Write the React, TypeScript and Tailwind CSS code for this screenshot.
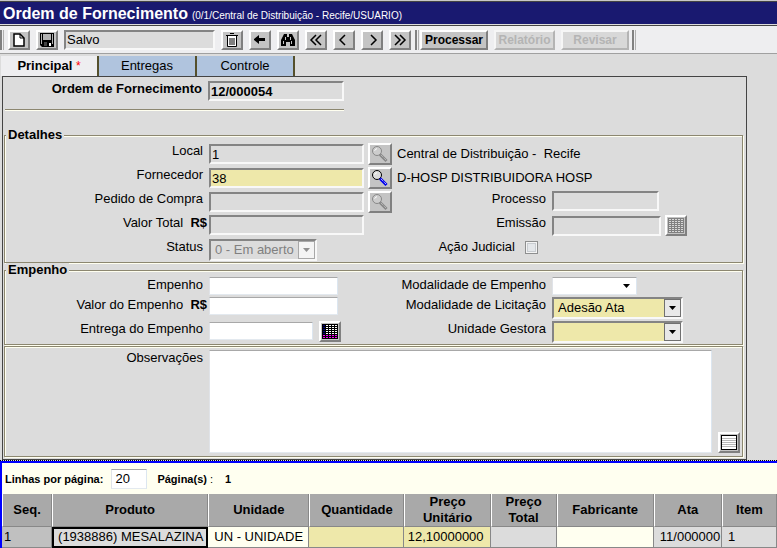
import type { ReactNode } from "react";

const BTN = "flex items-center justify-center border-2 border-t-white border-l-white border-r-[#808080] border-b-[#808080] bg-[#c4c4c4]";
const BTN_OFF = "flex items-center justify-center border-2 border-t-[#f6f6f6] border-l-[#f6f6f6] border-r-[#b4b4b4] border-b-[#b4b4b4] bg-[#d8d8d8] text-[#b4b4b4]";
const SUNK = "h-5 min-w-0 border-2 border-t-[#848484] border-l-[#848484] border-r-[#f8f8f8] border-b-[#f8f8f8] px-px text-[13px] leading-4";
const FLAT = "min-w-0 border border-t-[#a8a8a8] border-l-[#e0e3e8] border-r-[#dce6f0] border-b-[#e3e9ef] bg-white text-[13px]";
const GROUP = "ml-px mr-[3px] border border-[#8c8770] px-px pb-px shadow-[inset_1px_1px_0_#fffff0,1px_1px_0_#fffff0]";
const GRID = "grid grid-cols-[203px_159px_184px_1fr]";

function Icon({ children, fill = false }: { children: ReactNode; fill?: boolean }) {
  return (
    <svg width="18" height="16" viewBox="0 0 18 16" fill={fill ? "#000" : "none"} stroke={fill ? "none" : "#000"} strokeWidth="2" aria-hidden="true" className="shrink-0">
      {children}
    </svg>
  );
}

function ToolButton({ label, children }: { label: string; children: ReactNode }) {
  return (
    <button type="button" aria-label={label} className={`${BTN} h-5 w-[22px] shrink-0`}>
      {children}
    </button>
  );
}

function Separator() {
  return <div className="h-5 w-1 shrink-0 border-l-2 border-r border-l-[#808080] border-r-[#b0b0b0]" />;
}

function SearchButton({ label, disabled = false }: { label: string; disabled?: boolean }) {
  return (
    <button type="button" aria-label={label} disabled={disabled} className={`${BTN} h-[22px] w-6 shrink-0`}>
      <svg width="20" height="18" viewBox="0 0 20 18" fill="none" aria-hidden="true">
        <circle cx="7" cy="6" r="4.5" fill={disabled ? "#ccc" : "#ddd"} stroke={disabled ? "#888" : "#000"} />
        <path d="M4.500 5.500L7 3.500" stroke="#fff" />
        <path d="M10 9.500L16.500 16" stroke={disabled ? "#888" : "#00e"} strokeWidth="3" />
        <path d="M11 10L16.500 15.500" stroke={disabled ? "#ccc" : "#fff"} strokeWidth="1" strokeDasharray="1 1" />
      </svg>
    </button>
  );
}

function CalendarButton({ label, disabled = false }: { label: string; disabled?: boolean }) {
  const rows = [1, 3, 5, 7, 9, 11, 13];
  const days = [1, 4, 7, 10, 13];
  return (
    <button type="button" aria-label={label} disabled={disabled} className={`${BTN} h-[21px] w-[22px] shrink-0`}>
      <svg width="16" height="15" viewBox="0 0 16 15" shapeRendering="crispEdges" aria-hidden="true">
        <rect width="16" height="15" fill={disabled ? "#808080" : "#000"} />
        {rows.map((y) =>
          days.map((x) => (
            <rect
              key={`${x}-${y}`}
              x={x}
              y={y}
              width="2"
              height="1"
              fill={disabled ? "#d8d8d8" : y > 10 ? "#f0f" : x === 1 ? "#000080" : "#fff"}
            />
          )),
        )}
      </svg>
    </button>
  );
}

function Label({ htmlFor, children }: { htmlFor: string; children: ReactNode }) {
  return (
    <label htmlFor={htmlFor} className="block whitespace-nowrap pr-1.5 text-right leading-4">
      {children}
    </label>
  );
}

function Arrow({ color }: { color: string }) {
  return (
    <svg width="7" height="4" viewBox="0 0 7 4" aria-hidden="true">
      <path d="M0 0H7L3.500 4Z" fill={color} />
    </svg>
  );
}

function Select({ id, value, width, tone }: { id: string; value: string; width: string; tone: "gray" | "gold" | "white" }) {
  const look =
    tone === "white"
      ? "h-[18px] border border-t-[#a8a8a8] border-l-[#e0e3e8] border-r-[#dce6f0] border-b-[#e3e9ef] bg-white"
      : tone === "gold"
        ? "h-[22px] border-2 border-t-[#848484] border-l-[#848484] border-r-[#f8f8f8] border-b-[#f8f8f8] bg-[#eee8aa]"
        : "h-[22px] border-2 border-t-[#848484] border-l-[#848484] border-r-[#f8f8f8] border-b-[#f8f8f8] bg-[#dcdcdc] text-[#808080]";
  const box = tone === "white" ? "" : tone === "gold" ? "border border-[#707070] bg-[#e8e8e8]" : "border border-[#a8a8a8] bg-[#f4f4f4]";
  return (
    <div className={`grid ${width}`}>
      <select id={id} disabled={tone === "gray"} className={`col-start-1 row-start-1 w-full appearance-none pl-1 text-[13px] leading-4 opacity-100 ${look}`}>
        <option>{value}</option>
      </select>
      <div className={`pointer-events-none col-start-1 row-start-1 flex items-center justify-end pr-0.5 ${tone === "white" ? "h-[18px]" : "h-[22px]"}`}>
        <span className={`flex h-[18px] w-[17px] items-center justify-center ${box}`}>
          <Arrow color={tone === "gray" ? "#909090" : "#000"} />
        </span>
      </div>
    </div>
  );
}

const COLUMNS = [
  { name: "Seq.", col: "w-[50px]", value: "1", cell: "bg-[#c0c0c0] pl-0.5" },
  { name: "Produto", col: "w-[156px]", value: "(1938886) MESALAZINA", cell: "bg-[#dcdcdc] pl-1.5 outline-2 -outline-offset-2 outline-black" },
  { name: "Unidade", col: "w-[101px]", value: "UN - UNIDADE", cell: "bg-[#fffff0] pl-1.5" },
  { name: "Quantidade", col: "w-[95px]", value: "", cell: "bg-[#eee8aa]" },
  { name: "Preço Unitário", col: "w-[86px]", value: "12,10000000", cell: "bg-[#eee8aa] pr-1.5 text-right" },
  { name: "Preço Total", col: "w-[66px]", value: "", cell: "bg-[#dcdcdc]" },
  { name: "Fabricante", col: "w-[97px]", value: "", cell: "bg-[#fffff0]" },
  { name: "Ata", col: "w-[68px]", value: "11/000000", cell: "bg-[#dcdcdc] pl-1.5" },
  { name: "Item", col: "w-[55px]", value: "1", cell: "bg-[#dcdcdc] pl-1.5" },
];

const TAB = "h-5 w-[98px] border-r-2 border-[#55502c] leading-4";

export default function App() {
  return (
    <div className="min-h-screen bg-[#dcdcdc] font-['Liberation_Sans',Arial,sans-serif] text-[13px] leading-4 text-black">
      <header className="border-t border-[#c8c8c8]">
        <div className="flex h-[23px] items-center border-t border-[#444] bg-[#191970] pl-[3px] text-white">
          <h1 className="pt-0.5 text-base font-bold leading-5">Ordem de Fornecimento</h1>
          <span className="pl-1 pt-1.5 text-[10px] leading-3">(0/1/Central de Distribuição - Recife/USUARIO)</span>
        </div>
        <div className="h-0.5 border-b border-[#444] bg-[#dcdcdc]" />
      </header>

      <div className="flex h-7 items-center gap-1.5 border-b border-[#a0a0a0] bg-[#eeeef0]">
        <div className="w-0.5 shrink-0"><Separator /></div>
        <ToolButton label="Novo">
          <Icon>
            <path d="M4 2h6l4 4v8H4Z" fill="#fff" strokeWidth="1.500" />
            <path d="M10 2v4h4" strokeWidth="1" />
          </Icon>
        </ToolButton>
        <ToolButton label="Salvar">
          <Icon fill>
            <path d="M2 1h14v14H4l-2-2Z" />
            <path d="M5 2h8v6H5ZM3 2h1v10H3ZM14 2h1v10h-1Z" fill="#b4b4b4" />
            <path d="M6 10h3v4H6Z" fill="#444" />
            <path d="M11 11h2v3h-2Z" fill="#fff" />
          </Icon>
        </ToolButton>
        <input aria-label="Situação" readOnly defaultValue="Salvo" className={`${SUNK} w-[151px] bg-[#dcdcdc]`} />
        <ToolButton label="Excluir">
          <Icon>
            <path d="M3 3.500h12M7 1.500h4" strokeWidth="1" />
            <path d="M4.500 4v10.500h9V4" fill="#fff" strokeWidth="1" />
            <path d="M7 6v7M9 6v7M11 6v7" strokeWidth="1" />
          </Icon>
        </ToolButton>
        <ToolButton label="Voltar">
          <Icon fill><path d="M3 7l5-4v3h6v3H8v3L3 8Z" /></Icon>
        </ToolButton>
        <ToolButton label="Pesquisar">
          <Icon fill>
            <path d="M5 2h3v3h2V2h3l3 6v6h-5v-4H7v4H2V8Z" />
            <path d="M4 9h1v3H4ZM12 9h1v3h-1ZM6 5h1v3H6ZM11 5h1v3h-1Z" fill="#c4c4c4" />
          </Icon>
        </ToolButton>
        <ToolButton label="Primeiro"><Icon><path d="M9 3L4 8l5 5M14 3L9 8l5 5" strokeWidth="1.500" /></Icon></ToolButton>
        <ToolButton label="Anterior"><Icon><path d="M10 3L5 8l5 5" strokeWidth="1.500" /></Icon></ToolButton>
        <ToolButton label="Próximo"><Icon><path d="M8 3l5 5-5 5" strokeWidth="1.500" /></Icon></ToolButton>
        <div className="flex shrink-0 gap-1">
          <ToolButton label="Último"><Icon><path d="M4 3l5 5-5 5M9 3l5 5-5 5" strokeWidth="1.500" /></Icon></ToolButton>
          <Separator />
          <button type="button" className={`${BTN} -ml-[3px] h-5 w-[68px] shrink-0 text-xs font-bold`}>Processar</button>
        </div>
        <button type="button" disabled className={`${BTN_OFF} h-5 w-[61px] shrink-0 text-xs font-bold`}>Relatório</button>
        <div className="flex shrink-0 gap-[3px]">
          <button type="button" disabled className={`${BTN_OFF} h-5 w-[68px] shrink-0 text-xs font-bold`}>Revisar</button>
          <Separator />
        </div>
      </div>

      <nav className="flex h-[22px] pl-px pt-0.5" role="tablist">
        <button type="button" role="tab" aria-selected="true" className={`${TAB} bg-[#eeeef0] font-bold`}>
          Principal <span className="text-xs font-normal text-[#f00]">*</span>
        </button>
        <button type="button" role="tab" aria-selected="false" className={`${TAB} bg-[#b0c4de]`}>Entregas</button>
        <button type="button" role="tab" aria-selected="false" className={`${TAB} bg-[#b0c4de]`}>Controle</button>
      </nav>

      <main className="ml-0.5 mr-[30px] border border-[#444] pb-0.5">
        <div className="flex items-start pt-1">
          <label htmlFor="ordem" className="w-[205px] shrink-0 pr-1.5 text-right font-bold">Ordem de Fornecimento</label>
          <input id="ordem" readOnly defaultValue="12/000054" className={`${SUNK} w-[136px] bg-[#dcdcdc] font-bold`} />
        </div>
        <div className="ml-0.5 mt-2 h-0.5 w-[339px] border-t border-b border-t-[#8c8770] border-b-[#fffff0]" />

        <fieldset className={`${GROUP} mt-4 h-[136px]`}>
          <legend className="bg-[#dcdcdc] px-0.5 font-bold">Detalhes</legend>
          <div className={`${GRID} auto-rows-[24px]`}>
            <Label htmlFor="local">Local</Label>
            <input id="local" readOnly defaultValue="1" className={`${SUNK} mt-px w-[155px] bg-[#dcdcdc]`} />
            <div className="col-span-2 flex gap-[5px]">
              <SearchButton label="Buscar local" disabled />
              <span className="pt-[3px]">Central de Distribuição -&nbsp; Recife</span>
            </div>
            <Label htmlFor="fornecedor">Fornecedor</Label>
            <input id="fornecedor" defaultValue="38" className={`${SUNK} mt-px w-[155px] bg-[#eee8aa]`} />
            <div className="col-span-2 flex gap-[5px]">
              <SearchButton label="Buscar fornecedor" />
              <span className="pt-[3px]">D-HOSP DISTRIBUIDORA HOSP</span>
            </div>
            <Label htmlFor="pedido">Pedido de Compra</Label>
            <input id="pedido" readOnly className={`${SUNK} mt-px w-[155px] bg-[#dcdcdc]`} />
            <div className="flex justify-between">
              <SearchButton label="Buscar pedido" disabled />
              <Label htmlFor="processo">Processo</Label>
            </div>
            <input id="processo" readOnly className={`${SUNK} w-[107px] bg-[#dcdcdc]`} />
            <label htmlFor="total" className="pr-0.5 text-right">Valor Total &nbsp;<b>R$</b></label>
            <input id="total" readOnly className={`${SUNK} w-[155px] bg-[#dcdcdc]`} />
            <Label htmlFor="emissao">Emissão</Label>
            <div className="flex gap-1">
              <input id="emissao" readOnly className={`${SUNK} mt-px w-[109px] bg-[#dcdcdc]`} />
              <CalendarButton label="Calendário de emissão" disabled />
            </div>
            <Label htmlFor="status">Status</Label>
            <Select id="status" value="0 - Em aberto" width="w-[108px]" tone="gray" />
            <div className="flex justify-end gap-1 pr-3.5">
              <Label htmlFor="judicial">Ação Judicial</Label>
              <input id="judicial" type="checkbox" className="mt-0.5 h-[13px] w-[13px] appearance-none border border-[#8e8f8f] bg-[#e4e7ea] shadow-[inset_0_0_0_1px_#f4f4f4,inset_0_0_0_2px_#c8ccd0]" />
            </div>
          </div>
        </fieldset>

        <fieldset className={`${GROUP} h-[82px]`}>
          <legend className="bg-[#dcdcdc] px-0.5 font-bold leading-[14px]">Empenho</legend>
          <div className={`${GRID} grid-rows-[20px_24px_20px]`}>
            <Label htmlFor="empenho">Empenho</Label>
            <input id="empenho" className={`${FLAT} h-[18px] w-[129px] px-0.5`} />
            <Label htmlFor="modEmpenho">Modalidade de Empenho</Label>
            <Select id="modEmpenho" value="" width="w-[85px]" tone="white" />
            <label htmlFor="valor" className="pr-0.5 text-right">Valor do Empenho &nbsp;<b>R$</b></label>
            <input id="valor" className={`${FLAT} h-[18px] w-[129px] px-0.5`} />
            <Label htmlFor="modLicitacao">Modalidade de Licitação</Label>
            <Select id="modLicitacao" value="Adesão Ata" width="w-[131px]" tone="gold" />
            <Label htmlFor="entrega">Entrega do Empenho</Label>
            <div className="flex gap-1.5">
              <input id="entrega" className={`${FLAT} mt-px h-[18px] w-[104px] shrink-0 px-0.5`} />
              <CalendarButton label="Calendário de entrega" />
            </div>
            <Label htmlFor="gestora">Unidade Gestora</Label>
            <Select id="gestora" value="" width="w-[131px]" tone="gold" />
          </div>
        </fieldset>

        <div className={`${GROUP} mt-px flex items-end pt-[3px]`}>
          <div className="w-[203px] shrink-0 self-start">
            <Label htmlFor="obs">Observações</Label>
          </div>
          <textarea id="obs" className={`${FLAT} mb-0.5 h-[103px] flex-1 resize-none px-0.5`} />
          <button type="button" aria-label="Ampliar observações" className={`${BTN} mb-0.5 ml-1.5 mr-px h-[21px] w-[22px] shrink-0`}>
            <svg width="16" height="15" viewBox="0 0 16 15" shapeRendering="crispEdges" aria-hidden="true">
              <path d="M.5.5h15v14H.5Z" fill="#fff" stroke="#000" />
              <path d="M1 3.500h14M1 5.500h14M1 7.500h14M1 9.500h14M1 11.500h14" stroke="#b8b8b8" />
            </svg>
          </button>
        </div>
      </main>

      <section className="border-t border-dotted border-black">
        <div className="border-l-2 border-t-2 border-[#00f] bg-[#fffff0]">
          <div className="flex h-[31px] items-center pl-[3px] text-[11px] font-bold">
            <label htmlFor="linhas">Linhas por página:</label>
            <input id="linhas" defaultValue="20" className={`${FLAT} ml-2 h-5 w-9 px-[3px] font-normal`} />
            <span className="pl-2.5">Página(s)<span className="font-normal"> :</span></span>
            <span className="pl-3">1</span>
          </div>
          <table className="w-full table-fixed border-separate border-spacing-0">
            <colgroup>{COLUMNS.map((c) => <col key={c.name} className={c.col} />)}</colgroup>
            <thead>
              <tr>
                {COLUMNS.map((c) => (
                  <th key={c.name} className="h-[33px] border-b border-l border-r border-b-[#888] border-l-white border-r-[#888] bg-[#a9a9a9] px-2 py-0 font-bold leading-4">
                    {c.name}
                  </th>
                ))}
              </tr>
            </thead>
            <tbody>
              <tr>
                {COLUMNS.map((c) => (
                  <td key={c.name} className={`h-[21px] overflow-hidden whitespace-nowrap border-b border-r border-[#888] py-0 ${c.cell}`}>
                    {c.value}
                  </td>
                ))}
              </tr>
            </tbody>
          </table>
        </div>
      </section>
    </div>
  );
}
